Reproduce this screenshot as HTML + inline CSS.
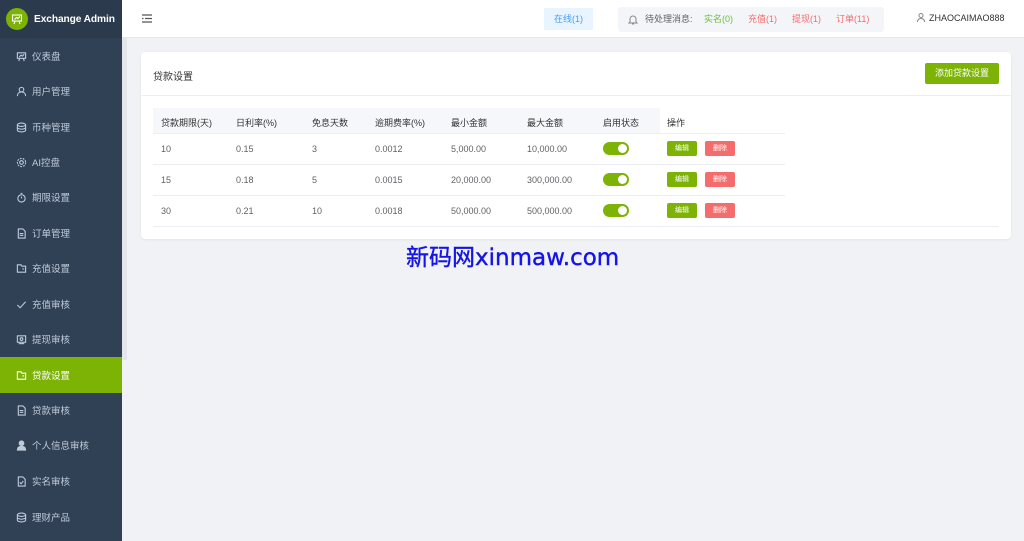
<!DOCTYPE html>
<html><head><meta charset="utf-8"><style>
*{margin:0;padding:0;box-sizing:border-box}
body{width:1024px;height:541px;overflow:hidden;background:#f0f2f5;font-family:"Liberation Sans","Noto Sans CJK SC",sans-serif;font-size:9px;color:#606266;position:relative}
.side{position:absolute;left:0;top:0;width:122px;height:541px;background:#304156;overflow:hidden}
.logo{height:38px;background:#2b3a4c;display:flex;align-items:center;padding-left:6px;white-space:nowrap}
.lc{width:22px;height:22px;border-radius:50%;background:#7cb305;display:flex;align-items:center;justify-content:center;flex:none}
.logo b{color:#fff;font-size:10.2px;margin-left:6px;white-space:nowrap;letter-spacing:-0.1px}
.mi{position:absolute;left:0;width:122px;height:36px;display:flex;align-items:center;padding-left:16px;color:#bfcbd9;font-size:9.5px}
.mi svg{width:11px;height:11px;margin-right:5px;fill:none;stroke:#bfcbd9;stroke-width:1.2}
.mi.act{background:#7cb305;color:#fff}
.mi.act svg{stroke:#fff}
.sb{position:absolute;left:122px;top:38px;width:5px;height:322px;background:#e4e6ea}
.hdr{position:absolute;left:122px;top:0;width:902px;height:38px;background:#fff;border-bottom:1px solid #e6e6e6}
.online{position:absolute;left:544px;top:8px;width:49px;height:22px;background:#e8f4ff;color:#409eff;border-radius:2px;text-align:center;line-height:22px;font-size:9px}
.msg{position:absolute;left:618px;top:7px;width:266px;height:25px;background:#f4f5f8;border-radius:3px;font-size:9px;line-height:25px}
.msg span{position:absolute}
.user{position:absolute;left:917px;top:13px;font-size:9px;color:#333}
.card{position:absolute;left:141px;top:52px;width:870px;height:187px;background:#fff;border-radius:4px;box-shadow:0 1px 3px rgba(0,0,0,.06)}
.ct{position:absolute;left:12px;top:16px;font-size:10px;color:#303133}
.line{position:absolute;left:0;top:43px;width:870px;height:1px;background:#ebeef5}
.add{position:absolute;left:784px;top:11px;width:74px;height:21px;background:#7cb305;color:#fff;border-radius:2px;text-align:center;line-height:21px;font-size:9px}
.th{position:absolute;left:12px;top:56px;width:507px;height:25px;background:#f5f7fa}
.t{position:absolute;font-size:9px}
.hl{position:absolute;left:12px;width:632px;height:1px;background:#ebeef5}
.sw{position:absolute;width:26px;height:13px;border-radius:7px;background:#7cb305}
.sw:after{content:"";position:absolute;right:2px;top:2px;width:9px;height:9px;border-radius:50%;background:#fff}
.be,.bd{position:absolute;width:30px;height:15px;border-radius:2px;color:#fff;font-size:7px;text-align:center;line-height:15px}
.be{background:#7cb305}.bd{background:#f56c6c}
.wm{position:absolute;left:406px;top:238px;font-size:23px;color:#1414e6;font-family:"DejaVu Sans","Noto Sans CJK SC",sans-serif;-webkit-text-stroke:0.4px #1414e6}
</style></head><body>
<div class="side">
<div class="logo"><div class="lc"><svg width="12" height="12" viewBox="0 0 12 12" fill="none" stroke="#fff" stroke-width="1.1"><rect x="1.5" y="2" width="9" height="6"/><path d="M3.5 6.5l2-2 1.5 1 2-2M4 8l-1 3M8 8l1 3M1 2h10"/></svg></div><b>Exchange Admin</b></div>
</div>
<div class="sb"></div>
<div class="mi" style="top:38px"><svg viewBox="0 0 12 12"><rect x="1.5" y="2" width="9" height="6"/><path d="M3.5 6.5l2-2 1.5 1 2-2M4 8l-1 3M8 8l1 3"/></svg>仪表盘</div>
<div class="mi" style="top:73px"><svg viewBox="0 0 12 12"><circle cx="6" cy="4" r="2.5"/><path d="M1.5 11c0-3 2-4.5 4.5-4.5s4.5 1.5 4.5 4.5"/></svg>用户管理</div>
<div class="mi" style="top:109px"><svg viewBox="0 0 12 12"><ellipse cx="6" cy="3" rx="4.5" ry="1.8"/><path d="M1.5 3v6c0 1 2 1.8 4.5 1.8s4.5-.8 4.5-1.8V3M1.5 6c0 1 2 1.8 4.5 1.8s4.5-.8 4.5-1.8"/></svg>币种管理</div>
<div class="mi" style="top:144px"><svg viewBox="0 0 12 12"><circle cx="6" cy="6" r="2"/><circle cx="6" cy="6" r="4.5" stroke-dasharray="2 1.2"/></svg>AI控盘</div>
<div class="mi" style="top:179px"><svg viewBox="0 0 12 12"><circle cx="6" cy="7" r="4"/><path d="M6 7V5M5 1.5h2"/></svg>期限设置</div>
<div class="mi" style="top:215px"><svg viewBox="0 0 12 12"><path d="M2.5 1h5l2.5 2.5V11h-7.5zM4 6h4M4 8h4"/></svg>订单管理</div>
<div class="mi" style="top:250px"><svg viewBox="0 0 12 12"><path d="M1.5 2h4l1 1.5h4V10h-9zM7 6.5h2"/></svg>充值设置</div>
<div class="mi" style="top:286px"><svg viewBox="0 0 12 12"><path d="M1.5 6.5l3 3 6-6.5"/></svg>充值审核</div>
<div class="mi" style="top:321px"><svg viewBox="0 0 12 12"><rect x="1.5" y="2" width="9" height="7"/><circle cx="6" cy="5.5" r="1.5"/><path d="M3 10.5h6"/></svg>提现审核</div>
<div class="mi act" style="top:357px"><svg viewBox="0 0 12 12"><path d="M1.5 2h4l1 1.5h4V10h-9zM7 6.5h2"/></svg>贷款设置</div>
<div class="mi" style="top:392px"><svg viewBox="0 0 12 12"><path d="M2.5 1h5l2.5 2.5V11h-7.5zM4 6h4M4 8h4"/></svg>贷款审核</div>
<div class="mi" style="top:427px"><svg viewBox="0 0 12 12" style="fill:#bfcbd9"><circle cx="6" cy="3.5" r="2.5"/><path d="M1.5 11c0-3 2-4 4.5-4s4.5 1 4.5 4z"/></svg>个人信息审核</div>
<div class="mi" style="top:463px"><svg viewBox="0 0 12 12"><path d="M2.5 1h5l2.5 2.5V11h-7.5zM4 7l1.5 1.5 2.5-3"/></svg>实名审核</div>
<div class="mi" style="top:499px"><svg viewBox="0 0 12 12"><ellipse cx="6" cy="3" rx="4.5" ry="1.8"/><path d="M1.5 3v6c0 1 2 1.8 4.5 1.8s4.5-.8 4.5-1.8V3M1.5 6c0 1 2 1.8 4.5 1.8s4.5-.8 4.5-1.8"/></svg>理财产品</div>

<div class="hdr"><svg style="position:absolute;left:20px;top:14px" width="10" height="9" viewBox="0 0 10 9" stroke="#555" stroke-width="1.3"><path d="M0 1h10M3 4.5h7M0 8h10"/><path d="M0 4.5h1.5"/></svg></div>
<div class="online">在线(1)</div>
<div class="msg"><svg style="position:absolute;left:10px;top:7px" width="10" height="11" viewBox="0 0 10 11" fill="none" stroke="#888" stroke-width="1"><path d="M2 8V5a3 3 0 016 0v3l1 1H1zM4 10h2"/></svg>
<span style="left:27px;color:#606266">待处理消息:</span><span style="left:86px;color:#67c23a">实名(0)</span><span style="left:130px;color:#f56c6c">充值(1)</span><span style="left:174px;color:#f56c6c">提现(1)</span><span style="left:218px;color:#f56c6c">订单(11)</span></div>
<div class="user"><svg style="vertical-align:-1px;margin-right:4px" width="8" height="9" viewBox="0 0 8 9" fill="none" stroke="#888" stroke-width="1"><circle cx="4" cy="2.5" r="2"/><path d="M.5 9c0-2.5 1.5-3.5 3.5-3.5S7.5 6.5 7.5 9"/></svg>ZHAOCAIMAO888</div>

<div class="card">
<div class="ct">贷款设置</div><div class="add">添加贷款设置</div><div class="line"></div>
<div class="th"></div>
<div class="t" style="left:20px;top:64px;color:#333">贷款期限(天)</div>
<div class="t" style="left:95px;top:64px;color:#333">日利率(%)</div>
<div class="t" style="left:171px;top:64px;color:#333">免息天数</div>
<div class="t" style="left:234px;top:64px;color:#333">逾期费率(%)</div>
<div class="t" style="left:310px;top:64px;color:#333">最小金额</div>
<div class="t" style="left:386px;top:64px;color:#333">最大金额</div>
<div class="t" style="left:462px;top:64px;color:#333">启用状态</div>
<div class="t" style="left:526px;top:64px;color:#333">操作</div>
<div class="hl" style="top:81px"></div>
<div class="t" style="left:20px;top:92px">10</div><div class="t" style="left:95px;top:92px">0.15</div><div class="t" style="left:171px;top:92px">3</div><div class="t" style="left:234px;top:92px">0.0012</div><div class="t" style="left:310px;top:92px">5,000.00</div><div class="t" style="left:386px;top:92px">10,000.00</div>
<div class="sw" style="left:462px;top:90px"></div><div class="be" style="left:526px;top:89px">编辑</div><div class="bd" style="left:564px;top:89px">删除</div>
<div class="hl" style="top:112px"></div>
<div class="t" style="left:20px;top:123px">15</div><div class="t" style="left:95px;top:123px">0.18</div><div class="t" style="left:171px;top:123px">5</div><div class="t" style="left:234px;top:123px">0.0015</div><div class="t" style="left:310px;top:123px">20,000.00</div><div class="t" style="left:386px;top:123px">300,000.00</div>
<div class="sw" style="left:462px;top:121px"></div><div class="be" style="left:526px;top:120px">编辑</div><div class="bd" style="left:564px;top:120px">删除</div>
<div class="hl" style="top:143px"></div>
<div class="t" style="left:20px;top:154px">30</div><div class="t" style="left:95px;top:154px">0.21</div><div class="t" style="left:171px;top:154px">10</div><div class="t" style="left:234px;top:154px">0.0018</div><div class="t" style="left:310px;top:154px">50,000.00</div><div class="t" style="left:386px;top:154px">500,000.00</div>
<div class="sw" style="left:462px;top:152px"></div><div class="be" style="left:526px;top:151px">编辑</div><div class="bd" style="left:564px;top:151px">删除</div>
<div class="hl" style="top:174px;width:846px"></div>
</div>
<div class="wm">新码网xinmaw.com</div>
</body></html>
